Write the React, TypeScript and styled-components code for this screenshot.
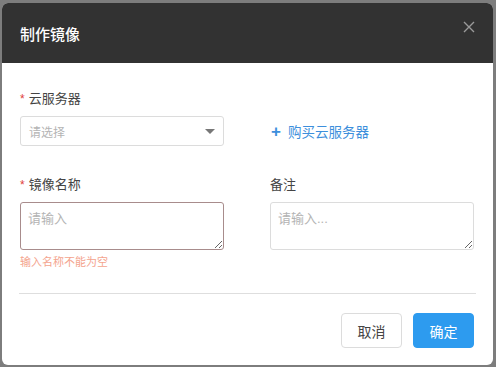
import React from 'react'
import styled, { createGlobalStyle } from 'styled-components'

const GlobalStyle = createGlobalStyle`
  html, body {
    margin: 0;
    padding: 0;
    background: #7d7d7d;
    font-family: "Liberation Sans", "Noto Sans CJK SC", sans-serif;
  }
  * { box-sizing: border-box; }
`

export default function App() {
    return (
        <>
            <GlobalStyle />
            <Backdrop>
                <Dialog>
                    <Header>
                        <Title>制作镜像</Title>
                        <CloseBtn aria-label="close">
                            <svg width="12" height="12" viewBox="0 0 12 12">
                                <path d="M1 1 L11 11 M11 1 L1 11" stroke="#9a9a9a" strokeWidth="1.4" />
                            </svg>
                        </CloseBtn>
                    </Header>
                    <Body>
                        <FormGrid>
                            <Field>
                                <Label required>云服务器</Label>
                                <Select>
                                    <Placeholder>请选择</Placeholder>
                                    <Caret />
                                </Select>
                            </Field>
                            <Field>
                                <Label />
                                <BuyLink>
                                    <Plus>+</Plus>购买云服务器
                                </BuyLink>
                            </Field>
                            <Field>
                                <Label required>镜像名称</Label>
                                <TextArea placeholder="请输入" error />
                                <ErrorText>输入名称不能为空</ErrorText>
                            </Field>
                            <Field>
                                <Label>备注</Label>
                                <TextArea placeholder="请输入..." />
                            </Field>
                        </FormGrid>
                        <Divider />
                        <Footer>
                            <Button>取消</Button>
                            <Button primary>确定</Button>
                        </Footer>
                    </Body>
                </Dialog>
            </Backdrop>
        </>
    )
}

const Backdrop = styled.div`
  width: 496px;
  height: 367px;
  padding: 3px 3px 2px 2px;
`

const Dialog = styled.div`
  width: 491px;
  height: 362px;
  background: #fff;
  border-radius: 6px;
  overflow: hidden;
  display: flex;
  flex-direction: column;
`

const Header = styled.div`
  height: 60px;
  background: #323232;
  display: flex;
  align-items: center;
  justify-content: space-between;
  padding: 0 14px 0 18px;
`

const Title = styled.div`
  color: #fff;
  font-size: 15px;
  font-weight: 500;
  margin-top: 1px;
`

const CloseBtn = styled.div`
  width: 20px;
  height: 20px;
  display: flex;
  align-items: center;
  justify-content: center;
  margin-top: -12px;
`

const Body = styled.div`
  padding: 26px 19px 0 18px;
  display: flex;
  flex-direction: column;
`

const FormGrid = styled.div`
  display: grid;
  grid-template-columns: 204px 204px;
  column-gap: 46px;
  row-gap: 29px;
`

const Field = styled.div`
  display: flex;
  flex-direction: column;
  align-items: flex-start;
`

const Label = styled.div<{ required?: boolean }>`
  height: 20px;
  line-height: 20px;
  font-size: 13px;
  color: #444;
  margin-bottom: 7px;
  ${(p) =>
        p.required &&
        `&::before {
    content: '*';
    color: #e0403a;
    font-size: 12px;
    margin-right: 4px;
  }`}
`

const Select = styled.div`
  width: 204px;
  height: 30px;
  border: 1px solid #dcdcdc;
  border-radius: 3px;
  display: flex;
  align-items: center;
  justify-content: space-between;
  padding: 0 8px 0 8px;
`

const Placeholder = styled.span`
  font-size: 12px;
  color: #b4b4b4;
`

const Caret = styled.span`
  width: 0;
  height: 0;
  border-left: 5px solid transparent;
  border-right: 5px solid transparent;
  border-top: 5px solid #777;
`

const BuyLink = styled.div`
  height: 30px;
  display: flex;
  align-items: center;
  font-size: 13.5px;
  color: #3d8fdc;
  padding-left: 1px;
`

const Plus = styled.span`
  font-size: 17px;
  font-weight: 700;
  margin-right: 7px;
  line-height: 1;
`

const TextArea = styled.textarea<{ error?: boolean }>`
  width: 204px;
  height: 48px;
  border: 1px solid ${(p) => (p.error ? '#a88c8c' : '#dcdcdc')};
  border-radius: 3px;
  padding: 5px 7px;
  font-size: 13px;
  font-family: "Liberation Sans", "Noto Sans CJK SC", sans-serif;
  resize: vertical;
  outline: none;
  &::placeholder {
    color: #b4b4b4;
  }
`

const ErrorText = styled.div`
  font-size: 11px;
  color: #f4a48e;
  margin-top: 5px;
  line-height: 14px;
`

const Divider = styled.div`
  height: 1px;
  background: #dedede;
  margin: 24px -2px 0 -1px;
`

const Footer = styled.div`
  display: flex;
  justify-content: flex-end;
  gap: 11px;
  margin-top: 19px;
`

const Button = styled.button<{ primary?: boolean }>`
  width: 61px;
  height: 35px;
  border-radius: 4px;
  font-size: 14px;
  font-family: "Liberation Sans", "Noto Sans CJK SC", sans-serif;
  border: 1px solid ${(p) => (p.primary ? '#2d9bef' : '#dcdcdc')};
  background: ${(p) => (p.primary ? '#2d9bef' : '#fff')};
  color: ${(p) => (p.primary ? '#fff' : '#444')};
  cursor: pointer;
`
